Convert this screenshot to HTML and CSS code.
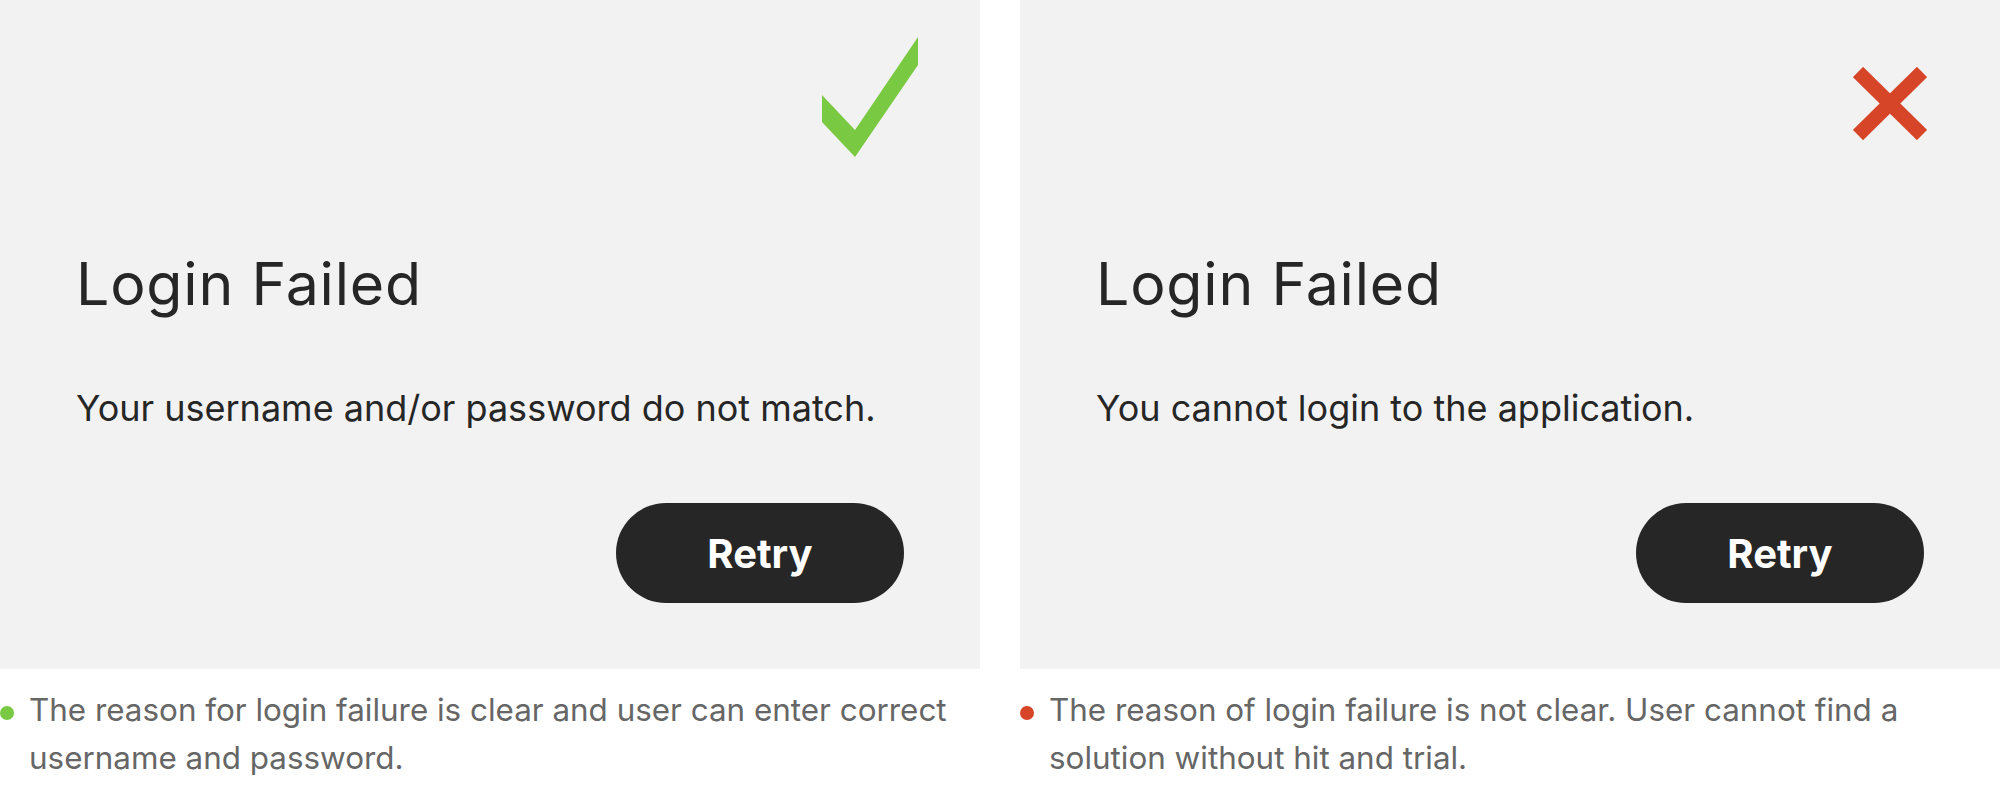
FILE: index.html
```html
<!DOCTYPE html>
<html lang="en">
<head>
    <meta charset="UTF-8">
    <meta name="viewport" content="width=device-width, initial-scale=1.0">
    <title>Login Failed - Do and Don't</title>
    <link rel="stylesheet" href="styles.css">
</head>
<body>
    <div class="compare">
        <!-- Good example -->
        <div class="example">
            <div class="panel">
                <div class="mark-row">
                    <svg class="mark mark-ok" width="96" height="120" viewBox="0 0 96 120">
                        <polygon points="0,58 33,93 96,0 96,28 33,120 0,85" fill="#7ac943"/>
                    </svg>
                </div>
                <h2>Login Failed</h2>
                <p class="message">Your username and/or password do not match.</p>
                <button type="button">Retry</button>
            </div>
            <div class="note">
                <span class="dot dot-ok"></span>
                <p>The reason for login failure is clear and user can enter correct username and password.</p>
            </div>
        </div>

        <!-- Bad example -->
        <div class="example">
            <div class="panel">
                <div class="mark-row">
                    <svg class="mark mark-bad" width="74" height="73" viewBox="0 0 74 73">
                        <line x1="5" y1="5" x2="69" y2="68" stroke="#d64527" stroke-width="14.5"/>
                        <line x1="69" y1="5" x2="5" y2="68" stroke="#d64527" stroke-width="14.5"/>
                    </svg>
                </div>
                <h2>Login Failed</h2>
                <p class="message">You cannot login to the application.</p>
                <button type="button">Retry</button>
            </div>
            <div class="note">
                <span class="dot dot-bad"></span>
                <p>The reason of login failure is not clear. User cannot find a solution without hit and trial.</p>
            </div>
        </div>
    </div>
</body>
</html>
```

FILE: styles.css
```css
body {
    font-family: Inter, "Noto Sans", sans-serif;
    background-color: #fff;
    margin: 0;
    padding: 0;
}

.compare {
    display: grid;
    grid-template-columns: 980px 980px;
    column-gap: 40px;
}

.panel {
    background-color: #f2f2f2;
    height: 669px;
    padding: 0 76px 0 76px;
    box-sizing: border-box;
    display: flex;
    flex-direction: column;
}

/* icon sits in the top right corner */
.mark-row {
    height: 248px;
    display: flex;
    justify-content: flex-end;
    align-items: flex-start;
}

.mark {
    display: block;
}

.mark-ok {
    margin: 37px -14px 0 0;
}

.mark-bad {
    margin: 67px -3px 0 0;
}

.panel h2 {
    margin: 0;
    font-size: 59px;
    line-height: 72px;
    font-weight: 400;
    letter-spacing: 0.8px;
    color: #262626;
}

.message {
    margin: 66px 0 0;
    font-size: 36px;
    line-height: 44px;
    color: #262626;
}

.panel button {
    align-self: flex-end;
    margin-top: 73px;
    width: 288px;
    height: 100px;
    border: none;
    border-radius: 50px;
    background-color: #262626;
    color: #fff;
    font-family: inherit;
    font-size: 40px;
    font-weight: 700;
    cursor: pointer;
}

/* caption under each panel */
.note {
    display: flex;
    align-items: flex-start;
    gap: 15px;
    margin-top: 17px;
}

.note p {
    margin: 0;
    font-size: 31.4px;
    line-height: 48px;
    color: #666;
}

.dot {
    flex: none;
    width: 14px;
    height: 14px;
    border-radius: 50%;
    margin-top: 20px;
}

.dot-ok {
    background-color: #7ac943;
}

.dot-bad {
    background-color: #d64527;
}
```
